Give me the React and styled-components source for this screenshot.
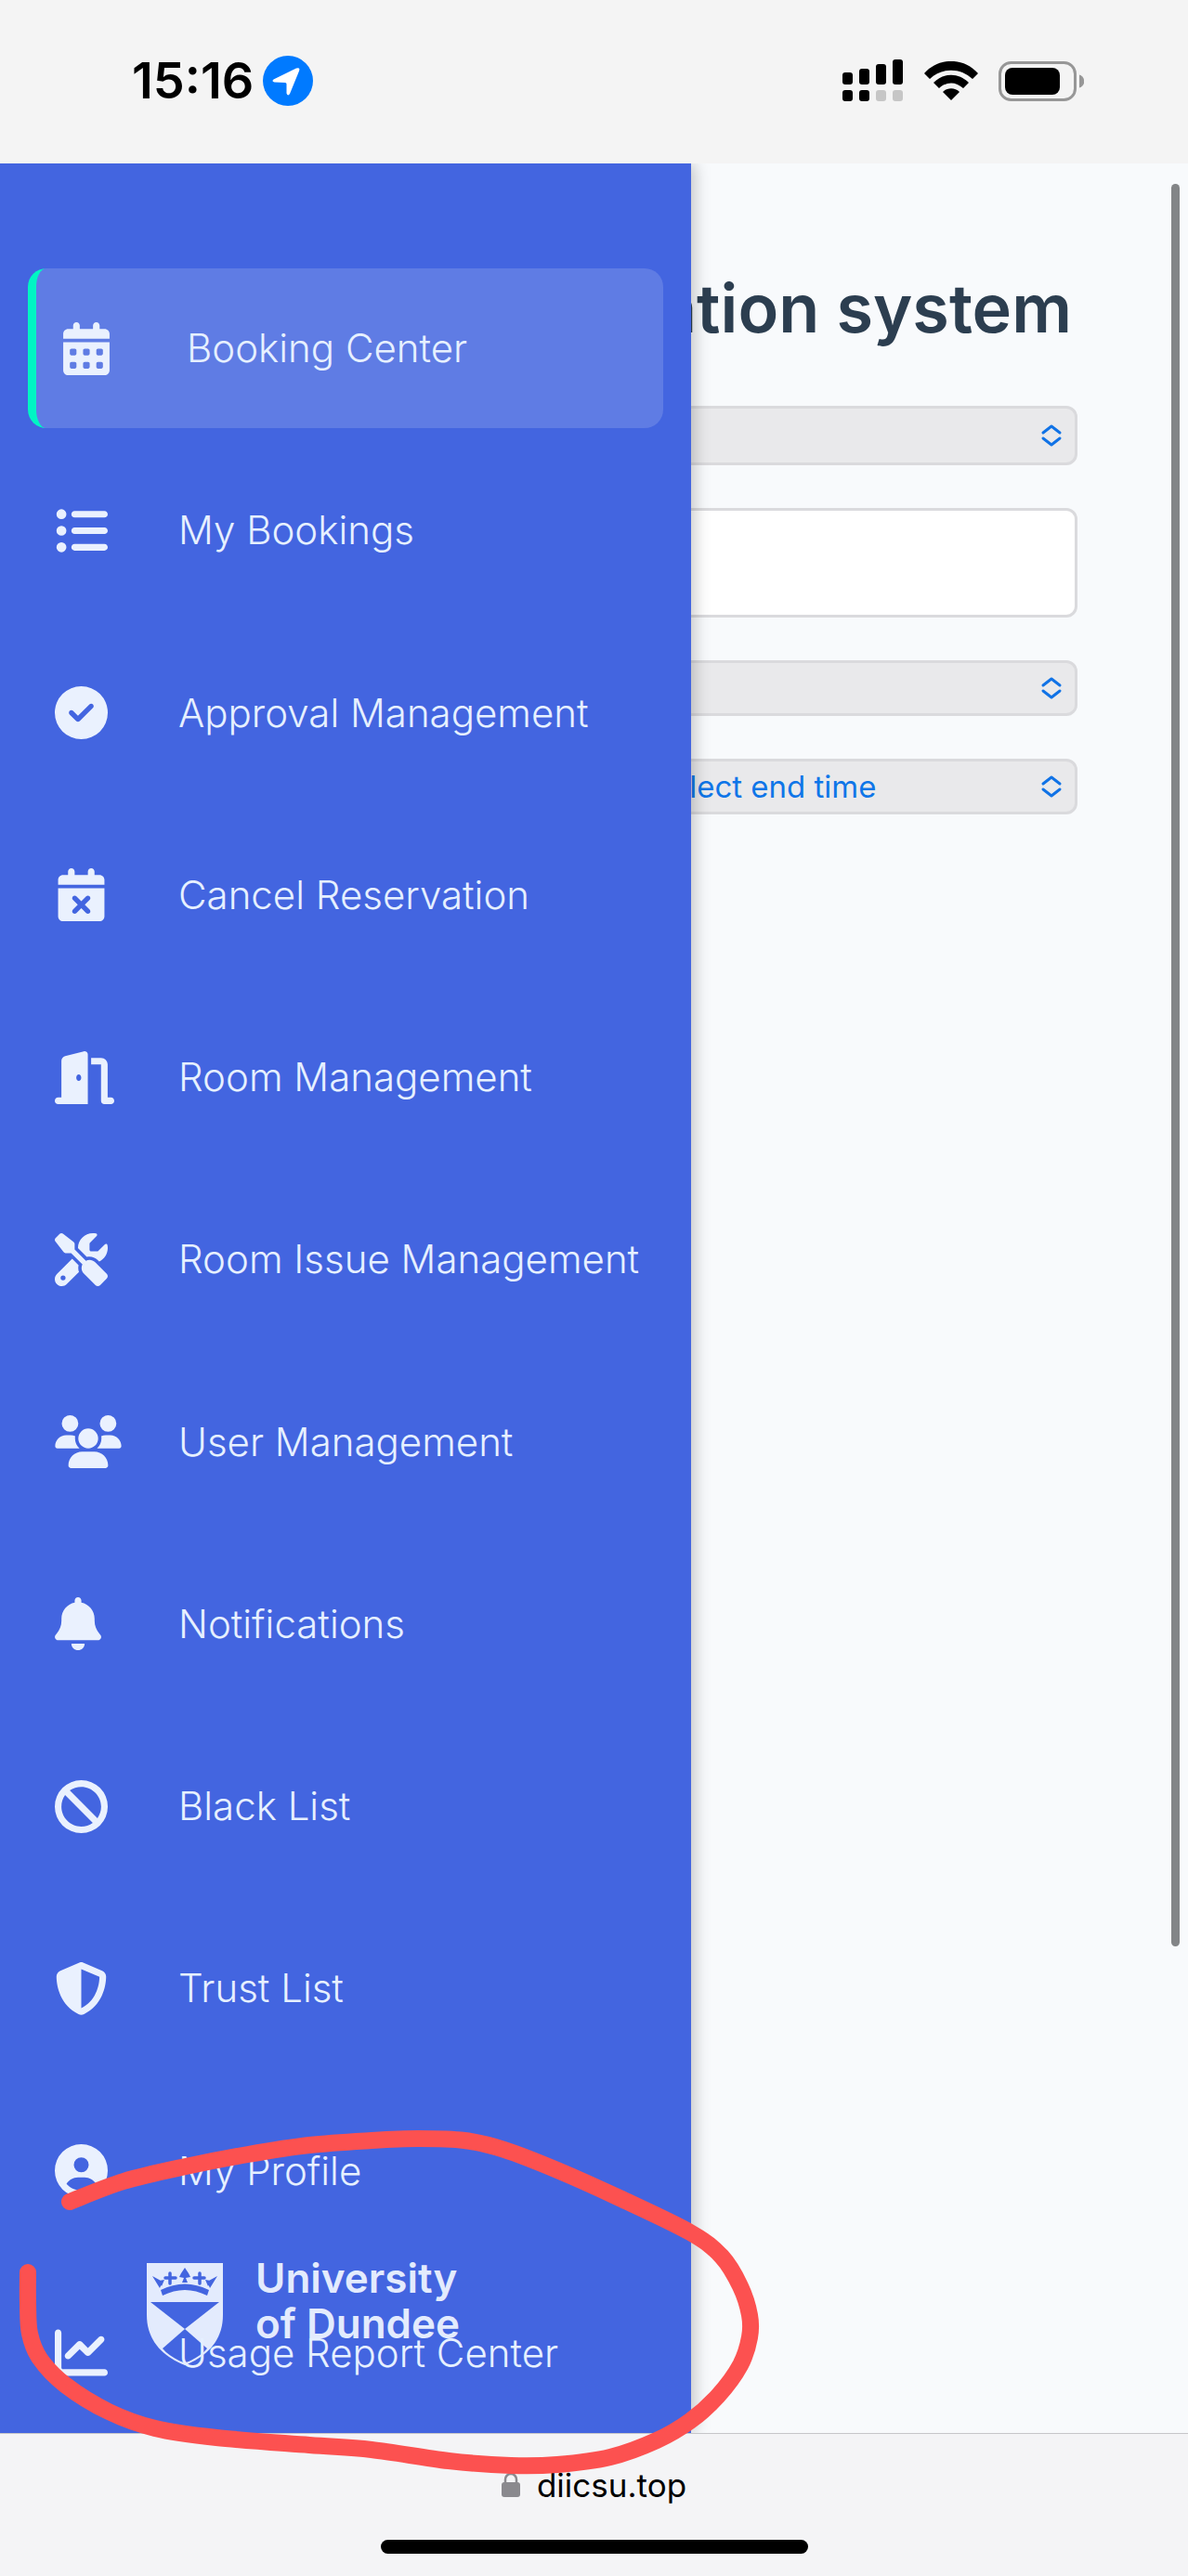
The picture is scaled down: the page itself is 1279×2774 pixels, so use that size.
import React from "react";
import styled, { createGlobalStyle } from "styled-components";
import {
  FaBan,
  FaBell,
  FaCalendarDays,
  FaCalendarXmark,
  FaChartLine,
  FaCircleCheck,
  FaCircleUser,
  FaDoorOpen,
  FaListUl,
  FaScrewdriverWrench,
  FaShieldHalved,
  FaUsers,
} from "react-icons/fa6";

const GlobalStyle = createGlobalStyle`
  * { box-sizing: border-box; }
  body {
    margin: 0;
    background: #f8fafc;
    font-family: Inter, "Liberation Sans", sans-serif;
  }
`;

const Screen = styled.div`
  position: relative;
  display: flex;
  flex-direction: column;
  min-height: 100vh;
  overflow: hidden;
`;

/* ---------- status bar ---------- */

const StatusBar = styled.header`
  display: flex;
  justify-content: space-between;
  align-items: center;
  height: 176px;
  padding: 0 112px 2px 142px;
  background: #f4f4f4;
`;

const StatusGroup = styled.div`
  display: flex;
  align-items: center;
  gap: ${(p) => p.$gap}px;
`;

const Clock = styled.time`
  font-size: 54px;
  line-height: 64px;
  font-weight: 600;
  color: #000;
`;

/* ---------- page behind the drawer ---------- */

const Body = styled.div`
  position: relative;
  flex: 1;
  display: flex;
  flex-direction: column;
  overflow: hidden;
`;

const Page = styled.main`
  flex: 1;
  padding: 112px 119px 0;
`;

const Title = styled.h1`
  margin: 0 6px 61px 0;
  font-size: 72px;
  line-height: 88px;
  font-weight: 600;
  text-align: right;
  color: #2c3e50;
`;

const Form = styled.form`
  display: flex;
  flex-direction: column;
  align-items: flex-end;
  gap: 46px;
`;

const Field = styled.div`
  position: relative;
  width: ${(p) => p.$width};
  height: ${(p) => p.$height}px;
`;

const SelectBox = styled.select`
  appearance: none;
  width: 100%;
  height: 100%;
  padding: 0 28px;
  border: 3px solid #dadadd;
  border-radius: 12px;
  background: #e9e9eb;
  color: #0f76e8;
  font-family: inherit;
  font-size: 33px;
`;

const TextBox = styled.input`
  width: 100%;
  height: 100%;
  padding: 0 28px;
  border: 3px solid #dadadd;
  border-radius: 12px;
  background: #fff;
  font-family: inherit;
  font-size: 33px;
`;

const Arrows = styled.svg`
  position: absolute;
  top: 50%;
  right: 16px;
  width: 24px;
  height: 26px;
  margin-top: -13px;
  pointer-events: none;
`;

const ScrollThumb = styled.div`
  position: absolute;
  top: 22px;
  right: 9px;
  width: 9px;
  height: 1898px;
  border-radius: 5px;
  background: #838587;
`;

/* ---------- drawer ---------- */

const Drawer = styled.aside`
  position: absolute;
  z-index: 0;
  top: 0;
  bottom: 0;
  left: 0;
  display: flex;
  width: 744px;
  background: #4365e0;
  box-shadow: 4px 0 16px rgba(0, 0, 0, 0.22);
`;

const NavList = styled.nav`
  position: relative;
  z-index: 1;
  flex: 1;
  display: flex;
  flex-direction: column;
  justify-content: space-between;
  padding: 113px 30px 0;
`;

const NavItem = styled.a`
  display: flex;
  align-items: center;
  height: 172px;
  padding-left: 29px;
  border-left: ${(p) => (p.$active ? "9px solid #00f5c4" : "0")};
  border-radius: 20px;
  background: ${(p) => (p.$active ? "rgba(255, 255, 255, 0.15)" : "none")};
  color: #e6f0ff;
  font-size: 42px;
  line-height: 52px;
  font-weight: 300;
  text-decoration: none;
  white-space: nowrap;
`;

const NavIcon = styled.span`
  display: flex;
  width: 133px;
  color: #eaf1fe;

  svg {
    width: ${(p) => p.$width || 57}px;
    height: 57px;
  }
`;

const Brand = styled.div`
  position: absolute;
  left: 158px;
  bottom: 73px;
  display: flex;
  align-items: flex-start;
  gap: 35px;
  color: #e3ebfd;
`;

const Crest = styled.svg`
  width: 82px;
  height: 110px;
  margin-top: 8px;
`;

const BrandName = styled.div`
  font-size: 44px;
  line-height: 49px;
  font-weight: 600;
`;

/* ---------- browser bar ---------- */

const BrowserBar = styled.footer`
  display: flex;
  flex-direction: column;
  align-items: center;
  justify-content: space-between;
  height: 154px;
  padding: 33px 0 24px;
  border-top: 1px solid #c6c6c9;
  background: #f4f4f6;
`;

const Address = styled.div`
  display: flex;
  align-items: center;
  gap: 18px;
  font-size: 35px;
  line-height: 44px;
  color: #000;
`;

const HomeIndicator = styled.div`
  width: 460px;
  height: 15px;
  border-radius: 8px;
  background: #000;
`;

const Scribble = styled.svg`
  position: absolute;
  z-index: 2;
  left: 0;
  bottom: 0;
  width: 840px;
  height: 514px;
  pointer-events: none;
`;

const navItems = [
  { label: "Booking Center", icon: FaCalendarDays, width: 50, active: true },
  { label: "My Bookings", icon: FaListUl },
  { label: "Approval Management", icon: FaCircleCheck },
  { label: "Cancel Reservation", icon: FaCalendarXmark },
  { label: "Room Management", icon: FaDoorOpen, width: 64 },
  { label: "Room Issue Management", icon: FaScrewdriverWrench },
  { label: "User Management", icon: FaUsers, width: 72 },
  { label: "Notifications", icon: FaBell, width: 50 },
  { label: "Black List", icon: FaBan },
  { label: "Trust List", icon: FaShieldHalved },
  { label: "My Profile", icon: FaCircleUser },
  { label: "Usage Report Center", icon: FaChartLine },
];

const scribblePoints = [
  [75, 111], [133, 89], [200, 73], [267, 60], [333, 50],
  [400, 45], [450, 43], [500, 45], [543, 55], [600, 77], [667, 107],
  [743, 144], [777, 170], [797, 202], [807, 233], [807, 257], [797, 287],
  [773, 320], [743, 347], [707, 368], [657, 386], [600, 394], [550, 395],
  [483, 390], [400, 378], [333, 373], [233, 365], [167, 355],
  [117, 337], [70, 308], [43, 280], [32, 253], [30, 220], [30, 187],
];

/* Catmull-Rom curve through the points, as cubic segments. */
function smooth(points) {
  let d = `M${points[0].join(" ")}`;
  for (let i = 0; i < points.length - 1; i += 1) {
    const a = points[i - 1] || points[i];
    const b = points[i];
    const c = points[i + 1];
    const e = points[i + 2] || c;
    d += `C${b[0] + (c[0] - a[0]) / 6} ${b[1] + (c[1] - a[1]) / 6} ${
      c[0] - (e[0] - b[0]) / 6
    } ${c[1] - (e[1] - b[1]) / 6} ${c[0]} ${c[1]}`;
  }
  return d;
}

function LocationBadge() {
  return (
    <svg width="54" height="54" viewBox="0 0 54 54" aria-hidden="true">
      <circle cx="27" cy="27" r="27" fill="#007aff" />
      <path
        d="M11.500 25.500 36 13.500Q40.500 12 39 16.500L29 41Q27 44 25.500 40.500V30.500Q25.500 29 24 29L12.500 28.500Q9 27.500 11.500 25.500Z"
        fill="#fff"
      />
    </svg>
  );
}

function Signal() {
  const tops = [14, 10, 5, 0];
  return (
    <svg width="66" height="46" viewBox="0 0 66 46" aria-hidden="true">
      {tops.map((top, i) => (
        <g key={top}>
          <rect x={i * 18} y={top} width="11" height={27 - top} rx="3" />
          <rect
            x={i * 18}
            y="33"
            width="11"
            height="12"
            rx="3"
            fill={i < 2 ? "#000" : "#c6c6c6"}
          />
        </g>
      ))}
    </svg>
  );
}

function Wifi() {
  return (
    <svg width="58" height="42" viewBox="0 0 58 42" aria-hidden="true">
      <path d="M0 13C16-4.500 42-4.500 58 13L52 19C39 6.500 19 6.500 6 19Z" />
      <path d="M10 23C21 12 37 12 48 23L42 29C34 21.500 24 21.500 16 29Z" />
      <path d="M20 33C25 28 33 28 38 33L29 42Z" />
    </svg>
  );
}

function Battery() {
  return (
    <svg width="92" height="43" viewBox="0 0 92 43" aria-hidden="true">
      <rect x="1.500" y="1.500" width="81" height="40" rx="12" fill="none" stroke="#979797" strokeWidth="3" />
      <rect x="7" y="7" width="59" height="29" rx="8" />
      <path d="M87 14.500c7 2 7 12 0 14Z" fill="#979797" />
    </svg>
  );
}

function SelectArrows() {
  return (
    <Arrows viewBox="0 0 24 26" fill="none" stroke="#1173e6" strokeWidth="3" strokeLinecap="round" strokeLinejoin="round">
      <path d="M3 10 12 3l9 7M3 16l9 7 9-7" />
    </Arrows>
  );
}

function Shield() {
  const blue = "#4365e0";
  return (
    <Crest viewBox="0 0 82 110" aria-hidden="true">
      <path d="M0 0H82V56C82 84 64 101 41 110C18 101 0 84 0 56Z" fill="currentColor" />
      <path d="M4 42H78L41 71Z" fill={blue} />
      <path d="M41 71 65 92C59 99 51 104 41 107.500C31 104 23 99 17 92Z" fill={blue} />
      <path d="M15 29Q41 16 67 29L65 35Q41 23 17 35Z" fill={blue} />
      <path
        d="M6 14 17 20 14 27ZM76 14 65 20 68 27ZM16 25 13 19 19 18ZM66 25 69 19 63 18Z"
        fill={blue}
      />
      <path
        d="M25 11v11M20 16h11M57 11v11M51 16h11"
        stroke={blue}
        strokeWidth="3.500"
        strokeLinecap="round"
      />
      <path d="M41 5 45 11 47 15 42 16 44 21H38L40 16 35 15 37 11Z" fill={blue} />
    </Crest>
  );
}

function Lock() {
  return (
    <svg width="20" height="28" viewBox="0 0 20 28" aria-hidden="true">
      <path d="M4 13V8a6 6 0 0 1 12 0v5" fill="none" stroke="#8a898e" strokeWidth="2.500" />
      <rect x="0" y="11" width="20" height="16" rx="3" fill="#8a898e" />
    </svg>
  );
}

export default function App() {
  return (
    <Screen>
      <GlobalStyle />
      <StatusBar>
        <StatusGroup $gap={10}>
          <Clock>15:16</Clock>
          <LocationBadge />
        </StatusGroup>
        <StatusGroup $gap={22}>
          <Signal />
          <Wifi />
          <Battery />
        </StatusGroup>
      </StatusBar>

      <Body>
        <Page>
          <Title>Reservation system</Title>
          <Form>
            <Field $width="100%" $height={64}>
              <SelectBox aria-label="Room" />
              <SelectArrows />
            </Field>
            <Field $width="100%" $height={118}>
              <TextBox type="text" aria-label="Date" />
            </Field>
            <Field $width="100%" $height={60}>
              <SelectBox aria-label="Start time" />
              <SelectArrows />
            </Field>
            <Field $width="47%" $height={60}>
              <SelectBox aria-label="End time">
                <option>Select end time</option>
              </SelectBox>
              <SelectArrows />
            </Field>
          </Form>
        </Page>
        <ScrollThumb />
        <Drawer>
          <NavList>
            {navItems.map(({ label, icon: Icon, width, active }) => (
              <NavItem key={label} href="#" $active={active}>
                <NavIcon $width={width}>
                  <Icon aria-hidden="true" />
                </NavIcon>
                {label}
              </NavItem>
            ))}
          </NavList>
          <Brand>
            <Shield />
            <BrandName>
              University
              <br />
              of Dundee
            </BrandName>
          </Brand>
        </Drawer>
      </Body>

      <BrowserBar>
        <Address>
          <Lock />
          diicsu.top
        </Address>
        <HomeIndicator />
      </BrowserBar>

      <Scribble viewBox="0 0 840 514" aria-hidden="true">
        <path
          d={smooth(scribblePoints)}
          fill="none"
          stroke="#fc5150"
          strokeWidth="18"
          strokeLinecap="round"
          strokeLinejoin="round"
        />
      </Scribble>
    </Screen>
  );
}
